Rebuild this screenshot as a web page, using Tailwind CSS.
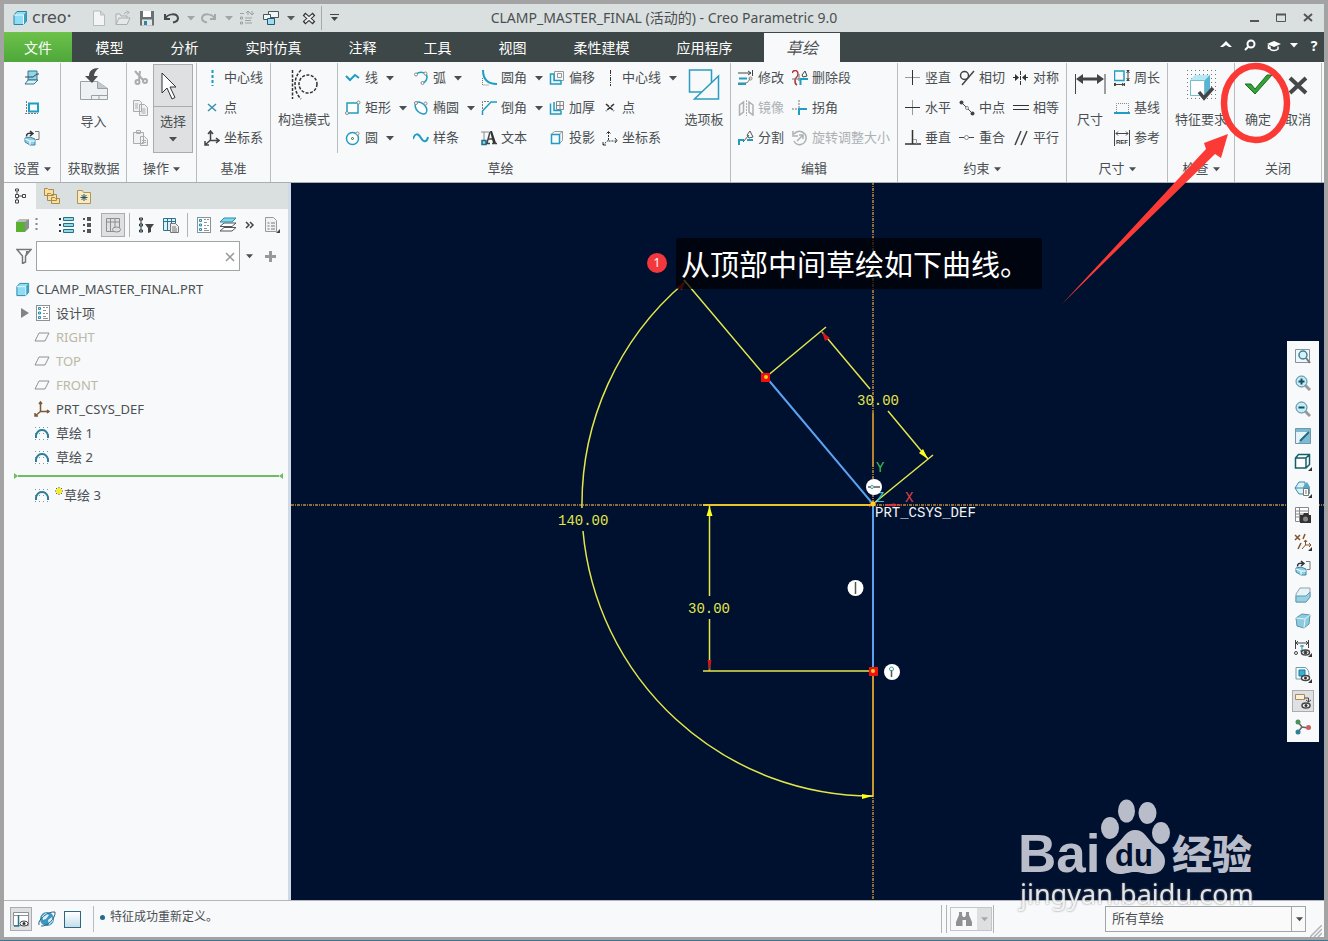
<!DOCTYPE html>
<html lang="zh-CN">
<head>
    <meta charset="UTF-8">
    <meta name="viewport" content="width=device-width, initial-scale=1.0">
    <title>CLAMP_MASTER_FINAL (活动的) - Creo Parametric 9.0</title>
    <script src="https://cdn.jsdelivr.net/npm/@tailwindcss/browser@4"></script>
</head>
<body class="relative h-screen overflow-hidden bg-[#3f7391] pb-px font-['Noto_Sans','Noto_Sans_CJK_SC',sans-serif] text-[13px] text-[#4b4f52]">

    <!-- shared symbols -->
    <svg class="hidden">
        <symbol id="caret" viewBox="0 0 8 5"><path d="M0 0h8L4 4.6z" fill="currentColor"/></symbol>
        <symbol id="plane" viewBox="0 0 16 16"><path d="M5 4h10l-4 8H1z" fill="none" stroke="#8f9294"/></symbol>
        <symbol id="sketch" viewBox="0 0 16 16">
            <path d="M1 2.500h14M1 8.500h14M1 14.500h14" stroke="#7d98a3" stroke-dasharray="1 3"/>
            <path d="M2 13v-3c1-3 3-5 6-5s5 2 6 5v3" fill="none" stroke="#2f7f9b" stroke-width="2"/>
        </symbol>
        <symbol id="list" viewBox="0 0 16 16">
            <rect x="1.5" y=".5" width="13" height="15" fill="#fff" stroke="#8b9194"/>
            <path d="M3.500 2.500h2v2h-2zM3.500 7h2v2h-2zM3.500 11.500h2v2h-2z" fill="#bfeaf7" stroke="#2a8fb0"/>
            <path d="M8 2.500h2m1 0h2M8 5.500h3M8 8.500h2m1 0h2M8 11.500h3M8 13.500h5" stroke="#8b9194"/>
        </symbol>
        <symbol id="orient" viewBox="0 0 16 16">
            <path d="M2.500 6.500C2.500 3.500 4 3 8 3.500M6 1l3 2.500L6 6" fill="none" stroke="#333" stroke-width="1.500"/>
            <path d="M11 1.500h4v8h-3" fill="none" stroke="#777"/>
            <path d="M1 8l5-1 5 2v6H6L1 12z" fill="#8fcfe6" stroke="#3c87a3"/><path d="M1 9l5 2v4M6 11h5" fill="none" stroke="#fff"/>
        </symbol>
        <symbol id="cube" viewBox="0 0 16 16">
            <path d="M2 5l3-3.500h9.500V11L11.500 14.500H2z" fill="#8fdcf5" stroke="#2c83a3"/>
            <path d="M11.500 5l3-3.500V11l-3 3.500z" fill="#3f9fc2"/><path d="M2 5h9.500v9.500" fill="none" stroke="#e6fbff"/>
        </symbol>
    </svg>

    <div class="flex h-full flex-col border-4 border-b-[3px] border-[#a3a3a4] bg-[#f7f9fb]">

        <!-- title bar -->
        <header class="relative flex h-7 shrink-0 items-center bg-[#dae0df]">
            <svg class="ml-2 size-4" viewBox="0 0 16 16"><use href="#cube"/></svg>
            <span class="ml-1 w-[60px] font-['DejaVu_Sans',sans-serif] text-[16px] leading-5">creo<sup class="text-[8px]">•</sup></span>
            <div class="-ml-px flex items-center gap-2 text-[#555a5c]">
                <button aria-label="新建" class="size-4"><svg viewBox="0 0 16 16"><path d="M2.500 1h7l4 4v10.500h-11zM9.500 1v4h4" fill="#f3f4f4" stroke="#b7bbbc"/></svg></button>
                <button aria-label="打开" class="size-4"><svg viewBox="0 0 16 16" fill="none" stroke="#a9aeb0"><path d="M1 14.500V4h4l1 2h6v2M1 14.500L4 8h11l-3 6.500z" fill="#e7e9e9"/><path d="M9 4c1-2 3-2.500 5-1.500M12 .5l2 2-2 2"/></svg></button>
                <button aria-label="保存" class="size-4"><svg viewBox="0 0 16 16"><path d="M1 1h14v14.500H1z" fill="#6a7073"/><path d="M4 1h8v6H4z" fill="#fff"/><path d="M3 9.500h10v6H3z" fill="#dfe6e8"/><path d="M5 11h3v4H5z" fill="#3a80a0"/></svg></button>
                <button aria-label="撤消" class="size-4"><svg viewBox="0 0 16 16" fill="none" stroke="#45494b" stroke-width="2"><path d="M2 4v5h5M2 9c3-6 12-6 13-1 0 3-2 4-5 4.500"/></svg></button>
                <button aria-label="撤消列表" class="w-1.5"><svg class="h-[5px] w-2 text-[#a0a5a6]"><use href="#caret"/></svg></button>
                <button aria-label="重做" class="size-4"><svg viewBox="0 0 16 16" fill="none" stroke="#a4a9aa" stroke-width="2"><path d="M14 4v5H9M14 9C11 3 2 3 1 8c0 3 2 4 5 4.500"/></svg></button>
                <button aria-label="重做列表" class="w-1.5"><svg class="h-[5px] w-2 text-[#a0a5a6]"><use href="#caret"/></svg></button>
                <button aria-label="重新生成" class="size-4"><svg viewBox="0 0 16 16" fill="none" stroke="#9ba0a2"><path d="M1 3.500h4M1.500 7v2h2V7zM1.500 12v2h2v-2zM6 8h7M6 13h7M6 10.500h6"/><path d="M9 5V1M7 3l2-2 2 2M13 1v4M11 3l2 2 2-2"/></svg></button>
                <button aria-label="窗口" class="size-4"><svg viewBox="0 0 16 16" fill="#eef6f8" stroke="#4a5558"><path d="M5.500 1.500h10v6h-10z"/><path d="M.5 4.500h7v5h-7z"/><path d="M4.500 8.500h7v6h-7z" fill="#9fdcf0" stroke="#27586c"/></svg></button>
                <button aria-label="窗口列表" class="w-1.5"><svg class="h-[5px] w-2"><use href="#caret"/></svg></button>
                <button aria-label="关闭窗口" class="size-4"><svg viewBox="0 0 16 16"><path d="M3 4l10 9M13 4L3 13" stroke="#333" stroke-width="4"/><path d="M4 5l8 7M12 5l-8 7" stroke="#eef0f0" stroke-width="2"/></svg></button>
            </div>
            <span class="ml-1 h-6 w-px bg-[#a5abac]"></span>
            <button aria-label="自定义" class="ml-2"><svg class="h-2 w-[9px]" viewBox="0 0 9 8"><path d="M0 .5h9" stroke="#444"/><path d="M1 3h7L4.500 7z" fill="#444"/></svg></button>
            <h1 class="absolute inset-x-0 text-center text-[14px] leading-5">CLAMP_MASTER_FINAL (活动的) - Creo Parametric 9.0</h1>
            <div class="relative mr-2 ml-auto flex gap-[11px]">
                <button aria-label="最小化" class="size-4"><svg viewBox="0 0 16 16"><path d="M4 11h9" stroke="#555" stroke-width="2"/></svg></button>
                <button aria-label="最大化" class="size-4"><svg viewBox="0 0 16 16" fill="none" stroke="#555"><path d="M3.500 4.500h9v7h-9z"/><path d="M3 4.500h10" stroke-width="2"/></svg></button>
                <button aria-label="关闭" class="size-4"><svg viewBox="0 0 16 16"><path d="M4 4l8 7M12 4l-8 7" stroke="#555" stroke-width="2"/></svg></button>
            </div>
        </header>

        <!-- ribbon tabs -->
        <nav class="flex h-[30px] shrink-0 items-stretch bg-[#3d4747] text-[14px] whitespace-nowrap text-white">
            <button class="w-[68px] bg-linear-to-b from-[#6cc24a] to-[#4ea73a]">文件</button>
            <button class="w-[75px]">模型</button>
            <button class="w-[75px]">分析</button>
            <button class="w-[103px]">实时仿真</button>
            <button class="w-[75px]">注释</button>
            <button class="w-[75px]">工具</button>
            <button class="w-[75px]">视图</button>
            <button class="w-[103px]">柔性建模</button>
            <button class="w-[103px]">应用程序</button>
            <button class="mt-px ml-2 w-[76px] bg-[#f7f9fb] text-[16px] text-[#4b4f52] italic">草绘</button>
            <div class="mr-1 mb-1 ml-auto flex items-center gap-2">
                <button aria-label="折叠功能区" class="size-4"><svg viewBox="0 0 16 16"><path d="M2 10l6-6 6 6h-3L8 8l-3 2z" fill="#fff"/></svg></button>
                <button aria-label="搜索" class="size-4"><svg viewBox="0 0 16 16" fill="none" stroke="#fff" stroke-width="2"><circle cx="9" cy="7" r="3.500"/><path d="M6.500 9.500L3 13"/></svg></button>
                <button aria-label="学习" class="size-4"><svg viewBox="0 0 16 16"><path d="M1 7l7-3 7 3-7 3z" fill="#fff"/><path d="M4 9.500V12c2 2 6 2 8 0V9.500M2.500 8v4" fill="none" stroke="#fff" stroke-width="1.500"/></svg></button>
                <button aria-label="学习列表" class="w-1.5"><svg class="h-[5px] w-2"><use href="#caret"/></svg></button>
                <button aria-label="帮助" class="w-4 pl-1 text-[14px] font-bold">?</button>
            </div>
        </nav>

        <!-- ribbon -->
        <section class="flex h-[121px] shrink-0 border-b border-[#a9b0b4] pt-px whitespace-nowrap">

            <div class="flex w-[57px] flex-col border-r border-[#b9bdc0]">
                <div class="flex h-[90px] flex-col items-center">
                    <button aria-label="草绘设置" class="flex h-[30px] items-center"><svg class="size-4" viewBox="0 0 16 16"><path d="M4 1h9v9H4z" fill="#8fd6ec" stroke="#34778f"/><path d="M4 10h10l-4 4H1z" fill="#d9f1f8" stroke="#34778f"/><path d="M1 7h8l4-3h2" fill="none" stroke="#444"/></svg></button>
                    <button aria-label="参考" class="flex h-[30px] items-center"><svg class="size-4" viewBox="0 0 16 16" fill="none"><path d="M5 3.500h9v8H5z" stroke="#1ea0c4" stroke-width="2"/><path d="M2.500 1v13M1 13.500h13" stroke="#777" stroke-dasharray="2 1"/></svg></button>
                    <button aria-label="草绘视图" class="flex h-[30px] items-center"><svg class="size-4"><use href="#orient"/></svg></button>
                </div>
                <button class="mt-1 flex h-6 items-center justify-center gap-1">设置<svg class="h-[5px] w-[7px]"><use href="#caret"/></svg></button>
            </div>

            <div class="flex w-[66px] flex-col border-r border-[#b9bdc0]">
                <button class="flex h-[90px] flex-col items-center pt-1">
                    <svg class="size-9" viewBox="0 0 36 36"><path d="M4.500 14.500h17l10 7v11h-27z" fill="#eef1f3" stroke="#9aa0a3"/><path d="M21.500 14.500v7h10" fill="#c3cacd" stroke="#9aa0a3"/><path d="M15.500 32.500v-4h16M23 28.500v4" fill="none" stroke="#9aa0a3"/><path d="M23 1c-7 0-10 3-10 8H9l7 7 6-7h-4c0-3 2-6 5-8z" fill="#4a4e50"/></svg>
                    <span class="mt-2 leading-5">导入</span>
                </button>
                <div class="mt-1 flex h-6 items-center justify-center">获取数据</div>
            </div>

            <div class="flex w-[70px] flex-col border-r border-[#b9bdc0]">
                <div class="flex h-[90px] justify-between pr-[3px] pl-[5px]">
                    <div class="flex flex-col">
                        <button aria-label="剪切" class="flex h-[30px] items-center"><svg class="size-4" viewBox="0 0 16 16" fill="none" stroke="#a9adaf" stroke-width="2"><path d="M3 1l8 9M8 1L7 10"/><circle cx="5.500" cy="12" r="2"/><circle cx="13" cy="11" r="2"/></svg></button>
                        <button aria-label="复制" class="flex h-[30px] items-center"><svg class="size-4" viewBox="0 0 16 16" fill="#f0f1f2" stroke="#a9adaf"><path d="M1.500.5h6l2 2v9h-8zM7.500 4.500h5l3 3v8h-8z"/><path d="M3 4h3M3 6h3M3 8h3M9.500 9h4M9.500 11h4M9.500 13h4"/></svg></button>
                        <button aria-label="粘贴" class="flex h-[30px] items-center"><svg class="size-4" viewBox="0 0 16 16" fill="#f0f1f2" stroke="#a9adaf"><path d="M1.500 2.500h10v11h-10zM4.500.5h4v3h-4zM8.500 6.500h4l3 3v6h-7z"/><path d="M10 10.500h4M10 12.500h4"/></svg></button>
                    </div>
                    <button class="mt-px flex w-10 flex-col items-center border border-[#a9adaf] bg-[#dfe0e1]">
                        <span class="flex h-[42px] w-full items-center justify-center border-b border-[#a9adaf]"><svg class="h-8 w-8" viewBox="0 0 32 32"><path d="M5 3v20l5-5 5 11 3-1.500-5-10.500h6z" fill="#fff" stroke="#333"/></svg></span>
                        <span class="mt-1 leading-5">选择</span>
                        <svg class="mt-1.5 h-[5px] w-2"><use href="#caret"/></svg>
                    </button>
                </div>
                <button class="mt-1 flex h-6 items-center justify-center gap-1">操作<svg class="h-[5px] w-[7px]"><use href="#caret"/></svg></button>
            </div>

            <div class="flex w-[74px] flex-col border-r border-[#b9bdc0]">
                <div class="h-[90px] pl-[7px]">
                    <button class="flex h-[30px] items-center gap-1"><svg class="size-4" viewBox="0 0 16 16"><path d="M8.500 0v16" stroke="#1b9cc0" stroke-width="2" stroke-dasharray="3 2"/></svg>中心线</button>
                    <button class="flex h-[30px] items-center gap-1"><svg class="size-4" viewBox="0 0 16 16"><path d="M4 4l8 7M12 4l-8 7" stroke="#3b8fae" stroke-width="1.500"/></svg>点</button>
                    <button class="flex h-[30px] items-center gap-1"><svg class="size-4" viewBox="0 0 16 16" fill="none" stroke="#444" stroke-width="1.500"><path d="M6.500 1v9.500H15M6.500 10L1 15M4 4l2.500-3L9 4M12 8l3 2.500-3 2.500M1 11v4h4"/></svg>坐标系</button>
                </div>
                <div class="mt-1 flex h-6 items-center justify-center">基准</div>
            </div>

            <div class="flex w-[460px] flex-col border-r border-[#b9bdc0]">
                <div class="flex h-[90px]">
                    <button class="flex w-[67px] flex-col items-center border-r border-[#b9bdc0] pt-1.5">
                        <svg class="size-8" viewBox="0 0 32 32" fill="none" stroke="#333" stroke-width="1.500" stroke-dasharray="3 1.500"><path d="M4.500 1v29M13 1c-8 8-8 21 0 29"/><circle cx="20" cy="15" r="9"/></svg>
                        <span class="mt-2 leading-5">构造模式</span>
                    </button>
                    <div class="w-[68px] pl-[7px]">
                        <button class="flex h-[30px] items-center gap-1"><svg class="size-4" viewBox="0 0 16 16" fill="none"><path d="M1 6l4 4 5-5 4 3" stroke="#1f9dc2" stroke-width="2"/></svg>线<svg class="ml-1 h-[5px] w-2"><use href="#caret"/></svg></button>
                        <button class="flex h-[30px] items-center gap-1"><svg class="size-4" viewBox="0 0 16 16" fill="#fff"><path d="M2 3h11v10H2z" stroke="#1f9dc2" stroke-width="1.500"/><circle cx="13.500" cy="2.500" r="1.500" stroke="#888"/><circle cx="2" cy="13" r="1.500" stroke="#888"/></svg>矩形<svg class="ml-1 h-[5px] w-2"><use href="#caret"/></svg></button>
                        <button class="flex h-[30px] items-center gap-1"><svg class="size-4" viewBox="0 0 16 16" fill="#fff"><circle cx="7.500" cy="8.500" r="6" stroke="#1f9dc2" stroke-width="1.500"/><circle cx="7.500" cy="8.500" r="1" stroke="#555"/><circle cx="12.500" cy="3.500" r="1.500" stroke="#888"/></svg>圆<svg class="ml-1 h-[5px] w-2"><use href="#caret"/></svg></button>
                    </div>
                    <div class="w-[68px] pl-[7px]">
                        <button class="flex h-[30px] items-center gap-1"><svg class="size-4" viewBox="0 0 16 16" fill="#fff"><path d="M3 4c6-4 11 0 11 3 0 4-2 5-4 6" fill="none" stroke="#1f9dc2" stroke-width="1.500"/><circle cx="3" cy="4.500" r="1.500" stroke="#888"/><circle cx="12.500" cy="3.500" r="1.500" stroke="#888"/><circle cx="9.500" cy="13" r="1.500" stroke="#888"/></svg>弧<svg class="ml-1 h-[5px] w-2"><use href="#caret"/></svg></button>
                        <button class="flex h-[30px] items-center gap-1"><svg class="size-4" viewBox="0 0 16 16" fill="#fff"><ellipse cx="8" cy="8" rx="7" ry="4.500" transform="rotate(45 8 8)" stroke="#1f9dc2" stroke-width="1.500"/><circle cx="3" cy="3" r="1.500" stroke="#888"/><circle cx="12.500" cy="3.500" r="1.500" stroke="#888"/></svg>椭圆<svg class="ml-1 h-[5px] w-2"><use href="#caret"/></svg></button>
                        <button class="flex h-[30px] items-center gap-1"><svg class="size-4" viewBox="0 0 16 16" fill="none"><path d="M0 9c2-6 5-6 8-1s6 4 7-1" stroke="#1f9dc2" stroke-width="2"/></svg>样条</button>
                    </div>
                    <div class="w-[68px] pl-[7px]">
                        <button class="flex h-[30px] items-center gap-1"><svg class="size-4" viewBox="0 0 16 16" fill="none"><path d="M2 0c0 9 5 14 14 14" stroke="#1f9dc2" stroke-width="2"/><path d="M1.500 8v7h7" stroke="#777" stroke-dasharray="1 1"/></svg>圆角<svg class="ml-1 h-[5px] w-2"><use href="#caret"/></svg></button>
                        <button class="flex h-[30px] items-center gap-1"><svg class="size-4" viewBox="0 0 16 16" fill="none"><path d="M1.500 15v-4L10 2h6" stroke="#1f9dc2" stroke-width="1.500"/><path d="M1.500 9V1.500h7" stroke="#777" stroke-dasharray="2 1"/></svg>倒角<svg class="ml-1 h-[5px] w-2"><use href="#caret"/></svg></button>
                        <button class="flex h-[30px] items-center gap-1"><svg class="size-4" viewBox="0 0 16 16"><path d="M0 2h8M3 2v9" stroke="#888"/><path d="M1 10.500h4v4H1z" fill="#8fd6ec" stroke="#1c6e8c" stroke-width="1.500"/><path d="M9 2L6 13M7 9h6M5 13.500h4M11 13.500h5" fill="none" stroke="#444" stroke-width="1.500"/><path d="M9 1h2l4 12h-3z" fill="#333"/></svg>文本</button>
                    </div>
                    <div class="w-[54px] pl-[7px]">
                        <button class="flex h-[30px] items-center gap-1"><svg class="size-4" viewBox="0 0 16 16" fill="none"><path d="M5.500 1.500h9v9h-9zM8.500 3.500h4v4h-4z" stroke="#999"/><path d="M5 4H1.500v10H12v-3.500M5 4v6.500h7" stroke="#1f9dc2" stroke-width="1.500"/></svg>偏移</button>
                        <button class="flex h-[30px] items-center gap-1"><svg class="size-4" viewBox="0 0 16 16" fill="none"><path d="M7.500 1.500h7v8h-7zM11 1.500v8M7.500 5.500h7" stroke="#888"/><path d="M1.500 3.500V14H12v-3.500M5 2v8.500h7" stroke="#1f9dc2" stroke-width="1.500"/></svg>加厚</button>
                        <button class="flex h-[30px] items-center gap-1"><svg class="size-4" viewBox="0 0 16 16" fill="none"><path d="M2.500 4l3-2.500h8v9l-3 3M10.500 4l3-2.500" stroke="#999"/><path d="M2.500 4.500h8v9h-8z" stroke="#1f9dc2" stroke-width="1.500"/></svg>投影</button>
                    </div>
                    <div class="w-[78px] pl-1.5">
                        <button class="flex h-[30px] items-center gap-1"><svg class="size-4" viewBox="0 0 16 16"><path d="M8.500 0v16" stroke="#333" stroke-dasharray="4 1 1 1"/></svg>中心线<svg class="ml-1 h-[5px] w-2 shrink-0"><use href="#caret"/></svg></button>
                        <button class="flex h-[30px] items-center gap-1"><svg class="size-4" viewBox="0 0 16 16"><path d="M4 4l8 7M12 4l-8 7" stroke="#333" stroke-width="1.500" stroke-dasharray="4 1"/></svg>点</button>
                        <button class="flex h-[30px] items-center gap-1"><svg class="size-4" viewBox="0 0 16 16" fill="none" stroke="#333"><path d="M6.500 2v9H15M6.500 10L1 15" stroke-dasharray="2 1"/><path d="M4.500 3.500l2-2 2 2M13 8l2 2.500-2 2.500M1 12v3h3"/></svg>坐标系</button>
                    </div>
                    <button class="flex grow flex-col items-center pt-1.5 pl-1">
                        <svg class="size-8" viewBox="0 0 32 32" fill="none" stroke="#2b9dbf" stroke-width="1.500"><path d="M1.500 1h22v22h-22z"/><path d="M30.500 7v23h-24z" fill="#f7f9fb"/></svg>
                        <span class="mt-2 leading-5">选项板</span>
                    </button>
                </div>
                <div class="mt-1 flex h-6 items-center justify-center">草绘</div>
            </div>

            <div class="flex w-[167px] flex-col border-r border-[#b9bdc0]">
                <div class="flex h-[90px] pl-[7px]">
                    <div class="w-[54px]">
                        <button class="flex h-[30px] items-center gap-1"><svg class="size-4" viewBox="0 0 16 16" fill="none"><path d="M0 3h13M14.500 0v6M10 1l3 2-3 2" stroke="#444"/><path d="M0 13h7c3 0 4-2 5-5" stroke="#777"/><path d="M0 14h8M1 8.500h8" stroke="#1f9dc2" stroke-width="2"/><circle cx="12.500" cy="8.500" r="1.500" stroke="#888"/></svg>修改</button>
                        <button disabled class="flex h-[30px] items-center gap-1 text-[#adb1b3]"><svg class="size-4" viewBox="0 0 16 16" fill="none" stroke="currentColor"><path d="M1.500 5L5.500 2v10l-4 3zM15 5l-4-3v10l4 3z" stroke-width="1.500"/><path d="M8.500 0v16" stroke-dasharray="2 1"/></svg>镜像</button>
                        <button class="flex h-[30px] items-center gap-1"><svg class="size-4" viewBox="0 0 16 16" fill="none"><path d="M1 15v-5h5M9 10h6" stroke="#1f9dc2" stroke-width="2"/><path d="M5 12l6-7M9 5l3-4 3 6-4 1z" stroke="#555"/></svg>分割</button>
                    </div>
                    <div>
                        <button class="flex h-[30px] items-center gap-1"><svg class="size-4" viewBox="0 0 16 16" fill="none"><path d="M0 3c2-4 6-3 6 1s-3 3-3 6 0 4 2 5" stroke="#b33a3a" stroke-width="1.500"/><path d="M8.500 15v-6H16" stroke="#1f9dc2" stroke-width="2"/><path d="M0 9h7M7 11V4" stroke="#777"/><path d="M10 5l3-4 2 5-4 1z" stroke="#444"/></svg>删除段</button>
                        <button class="flex h-[30px] items-center gap-1"><svg class="size-4" viewBox="0 0 16 16" fill="none"><path d="M7 15v-6h8" stroke="#1f9dc2" stroke-width="2"/><path d="M7 0v8M0 9h6" stroke="#777" stroke-dasharray="2 1"/></svg>拐角</button>
                        <button disabled class="flex h-[30px] items-center gap-1 text-[#adb1b3]"><svg class="size-4" viewBox="0 0 16 16" fill="none" stroke="currentColor"><path d="M2 4c5-6 13-1 12 5s-9 8-12 2M1 1v5h5M5 11l6-6M7 5h4v4" stroke-width="1.500"/></svg>旋转调整大小</button>
                    </div>
                </div>
                <div class="mt-1 flex h-6 items-center justify-center">编辑</div>
            </div>

            <div class="flex w-[169px] flex-col border-r border-[#b9bdc0]">
                <div class="flex h-[90px] pl-[7px]">
                    <div class="w-[54px]">
                        <button class="flex h-[30px] items-center gap-1"><svg class="size-4" viewBox="0 0 16 16"><path d="M0 7.500h15" stroke="#999"/><path d="M7.500 0v15" stroke="#333"/></svg>竖直</button>
                        <button class="flex h-[30px] items-center gap-1"><svg class="size-4" viewBox="0 0 16 16"><path d="M7.500 0v15" stroke="#999"/><path d="M0 7.500h15" stroke="#333"/></svg>水平</button>
                        <button class="flex h-[30px] items-center gap-1"><svg class="size-4" viewBox="0 0 16 16" fill="none"><path d="M7.500 0v14M0 14h16" stroke="#333" stroke-width="1.500"/><path d="M8 9.500h3.500V14" stroke="#999"/></svg>垂直</button>
                    </div>
                    <div class="w-[54px]">
                        <button class="flex h-[30px] items-center gap-1"><svg class="size-4" viewBox="0 0 16 16" fill="none"><circle cx="5.500" cy="5.500" r="4" stroke="#444" stroke-width="1.500"/><path d="M15 1L3 15" stroke="#444" stroke-width="1.500"/></svg>相切</button>
                        <button class="flex h-[30px] items-center gap-1"><svg class="size-4" viewBox="0 0 16 16" fill="#444"><path d="M2 2l12 12" stroke="#444"/><circle cx="2.500" cy="2.500" r="2"/><circle cx="13.500" cy="13.500" r="2"/><circle cx="8" cy="8" r="1.500" fill="#fff" stroke="#888"/></svg>中点</button>
                        <button class="flex h-[30px] items-center gap-1"><svg class="size-4" viewBox="0 0 16 16"><path d="M0 7.500h5M10 7.500h5" stroke="#444"/><circle cx="7.500" cy="7.500" r="2" fill="#fff" stroke="#888"/></svg>重合</button>
                    </div>
                    <div>
                        <button class="flex h-[30px] items-center gap-1"><svg class="size-4" viewBox="0 0 16 16"><path d="M7.500 1v14" stroke="#333" stroke-dasharray="4 1"/><path d="M0 7.500h3M12 7.500h3" stroke="#333"/><path d="M2 4l4 3.500L2 11zM13 4L9 7.500l4 3.500z" fill="#333"/></svg>对称</button>
                        <button class="flex h-[30px] items-center gap-1"><svg class="size-4" viewBox="0 0 16 16"><path d="M0 5.500h16M0 9.500h16" stroke="#333"/></svg>相等</button>
                        <button class="flex h-[30px] items-center gap-1"><svg class="size-4" viewBox="0 0 16 16"><path d="M8 1L2 15M14 1L8 15" stroke="#444" stroke-width="1.500"/></svg>平行</button>
                    </div>
                </div>
                <button class="mt-1 flex h-6 items-center justify-center gap-1">约束<svg class="h-[5px] w-[7px]"><use href="#caret"/></svg></button>
            </div>

            <div class="flex w-[101px] flex-col border-r border-[#b9bdc0]">
                <div class="flex h-[90px] pl-1.5">
                    <button class="flex w-[34px] flex-col items-center pt-1.5">
                        <svg class="size-8" viewBox="0 0 32 32"><path d="M1.500 5v20M31 5v20" stroke="#444"/><path d="M2 10l7-5v3.500h14V5l7 5-7 5v-3.500H9V15z" fill="#444"/></svg>
                        <span class="mt-2 leading-5">尺寸</span>
                    </button>
                    <div class="pl-[7px]">
                        <button class="flex h-[30px] items-center gap-1"><svg class="size-4" viewBox="0 0 16 16" fill="none"><path d="M.5 1h9.500v9.500H.5z" stroke="#1f9dc2" stroke-width="1.500"/><path d="M14 1v9M12.500.5h3M12.500 10.500h3M12.500 3l1.500-2 1.500 2M12.500 8l1.500 2 1.500-2M0 14.500h10M.5 13v3M10.500 13v3M2 13l-2 1.500L2 16M8 13l2 1.500L8 16" stroke="#444"/></svg>周长</button>
                        <button class="flex h-[30px] items-center gap-1"><svg class="size-4" viewBox="0 0 16 16" fill="none"><path d="M2.500 12V3.500h12V12" stroke="#888" stroke-dasharray="1 1"/><path d="M0 13h16" stroke="#1f9dc2" stroke-width="2"/></svg>基线</button>
                        <button class="flex h-[30px] items-center gap-1"><svg class="size-4" viewBox="0 0 16 16" fill="none"><path d="M.5 0v16M15.500 0v16M2 3.500h12M4 1.500L2 3.500l2 2M12 1.500l2 2-2 2" stroke="#444"/><text x="8" y="14" text-anchor="middle" font-size="6" font-family="Liberation Sans" font-weight="bold" fill="#333">REF</text></svg>参考</button>
                    </div>
                </div>
                <button class="mt-1 flex h-6 items-center justify-center gap-1">尺寸<svg class="h-[5px] w-[7px]"><use href="#caret"/></svg></button>
            </div>

            <div class="flex w-[67px] flex-col border-r border-[#b9bdc0]">
                <button class="flex h-[90px] flex-col items-center pt-1.5">
                    <svg class="size-8" viewBox="0 0 32 32"><path d="M2 1.500h29M2 5.500h29M2 9.500h29M2 13.500h29M2 17.500h29M2 21.500h29M2 25.500h29M2 29.500h29" stroke="#777" stroke-dasharray="1 3"/><path d="M5 11l5-5h15v15l-5 6H5z" fill="#b5e8f7"/><path d="M5.500 11.500h14v15h-14z" fill="#fff" stroke="#79bdd3"/><path d="M20 11l5-5v15l-5 6z" fill="#57b4d3"/><path d="M14 23l5 6 9-10" fill="none" stroke="#444" stroke-width="3.500"/></svg>
                    <span class="mt-2 leading-5">特征要求</span>
                </button>
                <button class="mt-1 flex h-6 items-center justify-center gap-1">检查<svg class="h-[5px] w-[7px]"><use href="#caret"/></svg></button>
            </div>

            <div class="flex w-[87px] flex-col border-r border-[#b9bdc0]">
                <div class="flex h-[90px] justify-center">
                    <button class="flex w-10 flex-col items-center pt-1.5">
                        <svg class="size-8" viewBox="0 0 32 32"><path d="M3 15h6l4 5L25 6h5L13 25z" fill="#35a234" stroke="#1e6a28"/></svg>
                        <span class="mt-2 leading-5">确定</span>
                    </button>
                    <button class="flex w-10 flex-col items-center pt-1.5">
                        <svg class="size-8" viewBox="0 0 32 32"><path d="M8 9l16 15M24 9L8 24" stroke="#444849" stroke-width="4"/></svg>
                        <span class="mt-2 leading-5">取消</span>
                    </button>
                </div>
                <div class="mt-1 flex h-6 items-center justify-center">关闭</div>
            </div>
        </section>

        <div class="flex min-h-0 grow">
            <!-- model tree -->
            <aside class="flex w-[287px] shrink-0 flex-col border-r-[3px] border-[#cfdae6]">
                <div class="flex h-[26px] items-stretch bg-[#dae0df]">
                    <button aria-label="模型树" class="flex w-8 items-center justify-center bg-[#f7f9fb]"><svg class="size-4" viewBox="0 0 16 16" fill="none" stroke="#444"><path d="M3.500 1v2h3V1zM3.500 6.500v3h3v-3zM3.500 12v3h3v-3zM10.500 6.500v3h3v-3zM5 3.500v3M5 9.500V12M6.500 8h4"/></svg></button>
                    <button aria-label="文件夹浏览器" class="flex w-8 items-center justify-center"><svg class="size-[18px]" viewBox="0 0 18 18" fill="#f8dfa2" stroke="#a98a4a"><path d="M1.500 1.500h3l1 1h5v6h-9zM4.500 6.500h3l1 1h5v6h-9zM8.500 10.500h3l1 1h4v5h-8z"/></svg></button>
                    <button aria-label="收藏夹" class="flex w-8 items-center justify-center"><svg class="size-4" viewBox="0 0 16 16"><path d="M1.500 2.500h5l1 2h7v11h-13z" fill="#fbe9bd" stroke="#b0945a"/><path d="M8 6v7M4.500 9.500h7M5.500 7l5 5M10.500 7l-5 5" stroke="#23566b"/></svg></button>
                </div>
                <div class="flex h-8 items-center pl-2.5">
                    <button aria-label="显示" class="size-4"><svg viewBox="0 0 16 16"><path d="M2 5l4-3h9v9l-4 4z" fill="#8a8f90"/><path d="M2 5l4-3h9l-4 3z" fill="#b9bdbe"/><path d="M2 5h9v10H2z" fill="#5ab031"/></svg></button>
                    <svg class="ml-0.5 h-4 w-2" viewBox="0 0 8 16"><path d="M4.500 1v15" stroke="#888" stroke-width="2" stroke-dasharray="2 3"/></svg>
                    <button aria-label="全部展开" class="ml-[18px] size-4"><svg viewBox="0 0 16 16"><path d="M1 2h2M1 8h2M1 14h2" stroke="#333" stroke-width="2"/><path d="M5.500.5h10v3h-10zM5.500 6.500h10v3h-10zM5.500 12.500h10v3h-10z" fill="#8edbe9" stroke="#286f80"/></svg></button>
                    <button aria-label="全部折叠" class="ml-2 size-4"><svg viewBox="0 0 16 16" fill="#555"><path d="M1 1h2v2H1zM1 7h2v2H1zM1 13h2v2H1zM5 0h4v4H5zM5 6h4v4H5zM5 12h4v4H5z"/></svg></button>
                    <button aria-label="列" class="ml-[3px] flex size-6 items-center justify-center border border-[#a9adaf] bg-[#dfe0e1]"><svg class="size-4" viewBox="0 0 16 16" fill="none" stroke="#8b8f91"><path d="M1.500 1.500h13v13h-13zM1.500 5h13M5.500 1.500v13M10 1.500v13"/><ellipse cx="11.500" cy="12.500" rx="4" ry="2.500" fill="#dfe0e1"/></svg></button>
                    <span class="ml-1 h-6 w-px bg-[#b0b4b6]"></span>
                    <button aria-label="过滤器" class="ml-2 size-4"><svg viewBox="0 0 16 16"><path d="M1.500 1v2h3V1zM1.500 7v2h3V7zM1.500 13v2h3v-2zM3 3v4M3 9v4" fill="#7fd0e2" stroke="#333"/><path d="M7 7h9l-3 4v4l-3 1v-5z" fill="#444"/></svg></button>
                    <button aria-label="树列" class="ml-[9px] size-4"><svg viewBox="0 0 16 16"><path d="M.5 1.500h12v12H.5zM4.500 1.500v12M8.500 1.500v12M.5 4.500h12" fill="#d9f1f8" stroke="#31708a"/><path d="M7.500 6.500h5l3 3v6h-8z" fill="#eee" stroke="#777"/><path d="M9 10h4M9 12h5M9 14h5" stroke="#777"/></svg></button>
                    <span class="ml-2 h-6 w-px bg-[#b0b4b6]"></span>
                    <button aria-label="设计项" class="ml-2 size-4"><svg class="size-4"><use href="#list"/></svg></button>
                    <button aria-label="图层" class="ml-2 size-4"><svg viewBox="0 0 16 16" fill="#fff" stroke="#555"><path d="M0 14l4-3.500h12L12 14z"/><path d="M0 9.500L4 6h12l-4 3.500z"/><path d="M0 5l4-4h12l-4 4z" fill="#7fd8ee" stroke="#2b8caa"/></svg></button>
                    <button aria-label="更多" class="ml-1.5 w-4"><svg class="size-4" viewBox="0 0 16 16" fill="none" stroke="#444" stroke-width="1.500"><path d="M4 5l3 3-3 3M8 5l3 3-3 3"/></svg></button>
                    <button aria-label="设置" class="ml-1.5 size-4"><svg viewBox="0 0 16 16"><path d="M1.500.5h8l3 3v11h-11z" fill="#f1f2f3" stroke="#999"/><path d="M3.500 6h2M7 6h4M3.500 9h2M7 9h4M3.500 12h2M7 12h4" stroke="#777"/><path d="M16 12v4h-4z" fill="#444"/></svg></button>
                </div>
                <div class="flex items-center pl-3">
                    <svg class="size-4" viewBox="0 0 16 16"><path d="M1 1.500h14L9.500 8v6l-3 1.500V8z" fill="#fff" stroke="#777" stroke-width="1.500"/><path d="M10 3h3L9 8v5z" fill="#777"/></svg>
                    <label for="tree-search" class="sr-only">搜索</label>
                    <div class="relative ml-1 h-[30px] w-[204px]">
                        <input id="tree-search" type="text" class="size-full border border-[#a0a5a8] bg-white px-2 outline-none">
                        <button aria-label="清除" class="absolute top-[11px] right-[5px] size-2.5"><svg viewBox="0 0 10 10"><path d="M1 1l8 8M9 1L1 9" stroke="#999" stroke-width="1.500"/></svg></button>
                    </div>
                    <button aria-label="搜索选项" class="ml-1.5"><svg class="h-[5px] w-[7px]"><use href="#caret"/></svg></button>
                    <button aria-label="添加" class="ml-3"><svg class="size-[11px]" viewBox="0 0 11 11"><path d="M5.500 0v11M0 5.500h11" stroke="#96999b" stroke-width="3"/></svg></button>
                </div>
                <ul class="mt-1.5 leading-6">
                    <li class="flex h-6 items-center gap-1.5 pl-[11px]"><svg class="size-[15px]"><use href="#cube"/></svg>CLAMP_MASTER_FINAL.PRT</li>
                    <li class="flex h-6 items-center pl-[17px]"><svg class="h-2.5 w-2" viewBox="0 0 8 10"><path d="M0 0l8 5-8 5z" fill="#808486"/></svg><svg class="mr-[5px] ml-1.5 size-4"><use href="#list"/></svg>设计项</li>
                    <li class="flex h-6 items-center gap-1.5 pl-[30px] text-[#bbb8a4]"><svg class="size-4"><use href="#plane"/></svg>RIGHT</li>
                    <li class="flex h-6 items-center gap-1.5 pl-[30px] text-[#bbb8a4]"><svg class="size-4"><use href="#plane"/></svg>TOP</li>
                    <li class="flex h-6 items-center gap-1.5 pl-[30px] text-[#bbb8a4]"><svg class="size-4"><use href="#plane"/></svg>FRONT</li>
                    <li class="flex h-6 items-center gap-1.5 pl-[30px]"><svg class="size-4" viewBox="0 0 16 16" fill="none" stroke="#7d5a35"><path d="M6.500 1v9.500H15M6.500 10.500L1 15M5 3l1.500-2L8 3M13 9l2 1.500-2 1.500M1 12v3h3" stroke-width="1.500"/></svg>PRT_CSYS_DEF</li>
                    <li class="flex h-6 items-center gap-1.5 pl-[30px]"><svg class="size-4"><use href="#sketch"/></svg>草绘 1</li>
                    <li class="flex h-6 items-center gap-1.5 pl-[30px]"><svg class="size-4"><use href="#sketch"/></svg>草绘 2</li>
                    <li class="flex h-3.5 items-center pr-[5px] pl-2.5 text-[#6fbd63]">
                        <svg class="h-1.5 w-1" viewBox="0 0 4 6"><path d="M0 0l4 3-4 3z" fill="currentColor"/></svg>
                        <span class="h-0.5 grow bg-[#6fbd63]"></span>
                        <svg class="h-1.5 w-1" viewBox="0 0 4 6"><path d="M4 0L0 3l4 3z" fill="currentColor"/></svg>
                    </li>
                    <li class="flex h-6 items-center pl-[30px]"><svg class="mr-1 size-4"><use href="#sketch"/></svg><svg class="mb-2 size-[10px]" viewBox="0 0 10 10"><path d="M5 1v8M1 5h8M2 2l6 6M8 2L2 8" stroke="#555"/><circle cx="5" cy="5" r="3" fill="#f5ee1f"/></svg>草绘 3</li>
                </ul>
            </aside>

            <!-- sketch canvas -->
            <main class="relative grow bg-[#00102f]">
                <svg class="absolute inset-0 size-full" viewBox="291 183 1033 717" fill="none" font-family="Liberation Mono, monospace" font-size="14">
                    <path d="M873 182v718M291 505h1033" stroke="#c08a3c" stroke-width="1.500" stroke-dasharray="3 1 1 1"/>
                    <path d="M873 413v54" stroke="#b9822f" stroke-width="2"/>
                    <path d="M873 671v126" stroke="#c9962f" stroke-width="2"/>
                    <g stroke="#e3e64a" stroke-width="1.500">
                        <path d="M684 280L766 377L826 327M822 332L870 389M888 411L928 459M873 504L933 455"/>
                        <path d="M684 283A291 291 0 0 0 582 508M583 531A291 291 0 0 0 873 796"/>
                        <path d="M703 671h170M709.500 505v91M709.500 619v52"/>
                    </g>
                    <path d="M703 505h170" stroke="#e8c52a" stroke-width="2"/>
                    <path d="M709.500 506l3 10h-6zM873 796l-11 3v-5zM928 459l-9-6 4-4z" fill="#ffff20"/>
                    <path d="M822 332l3 9 5-3zM685 282l-8 5 5 3zM709.500 671l-2-11h4z" fill="#d4141c"/>
                    <path d="M766 377L873 504V671" stroke="#5aa2f2" stroke-width="2"/>
                    <path d="M761 373h9v9h-9zM869 667h9v9h-9z" fill="#f01010"/>
                    <path d="M869 502l8 5M877 502l-8 5M885 505l10-1v2zM890 505h12" stroke="#d8383a" fill="#d8383a"/>
                    <g fill="#ffd21e"><circle cx="766" cy="377" r="2"/><circle cx="873" cy="504" r="2.500"/><circle cx="873" cy="671" r="2"/></g>
                    <g fill="#e3e64a"><text x="857" y="405">30.00</text><text x="688" y="613">30.00</text><text x="558" y="525">140.00</text></g>
                    <text x="876" y="472" fill="#35c24e">Y</text>
                    <text x="876" y="502" fill="#39c6d8">Z</text>
                    <text x="905" y="502" fill="#e0404a">X</text>
                    <text x="875" y="517" fill="#f4f4f4">PRT_CSYS_DEF</text>
                    <g fill="#fff"><circle cx="874" cy="487" r="8"/><circle cx="855.500" cy="588" r="8"/><circle cx="892" cy="672" r="8"/></g>
                    <path d="M855.500 582v12M891.500 670v7M874 487h6M868 487h3" stroke="#555" stroke-width="1.500"/>
                    <circle cx="872" cy="487" r="1.500" stroke="#4b98a5"/><circle cx="891.500" cy="669" r="2" stroke="#4b98a5"/>
                </svg>

                <div class="absolute top-[158px] right-[5px] flex h-[401px] w-8 flex-col items-center justify-between bg-[#f7f9fb] py-1">
                    <button aria-label="重新调整" class="flex size-[22px] items-center justify-center"><svg class="size-4" viewBox="0 0 16 16"><path d="M.5 1.500h14v13H.5z" fill="#eef7fa" stroke="#8b9194"/><circle cx="8" cy="7" r="4" fill="#d6f1f8" stroke="#3d8298" stroke-width="1.500"/><path d="M11 10l4 5" stroke="#777" stroke-width="2"/></svg></button>
                    <button aria-label="放大" class="flex size-[22px] items-center justify-center"><svg class="size-4" viewBox="0 0 16 16"><path d="M10 10l5 5" stroke="#999" stroke-width="3"/><circle cx="6.500" cy="6.500" r="5.500" fill="#c5ecf6" stroke="#4a8395"/><path d="M6.500 3.500v6M3.500 6.500h6" stroke="#144f65" stroke-width="2"/></svg></button>
                    <button aria-label="缩小" class="flex size-[22px] items-center justify-center"><svg class="size-4" viewBox="0 0 16 16"><path d="M10 10l5 5" stroke="#999" stroke-width="3"/><circle cx="6.500" cy="6.500" r="5.500" fill="#c5ecf6" stroke="#4a8395"/><path d="M3.500 6.500h6" stroke="#144f65" stroke-width="2"/></svg></button>
                    <button aria-label="重画" class="flex size-[22px] items-center justify-center"><svg class="size-4" viewBox="0 0 16 16"><path d="M.5.500h15v15H.5z" fill="#7dbad2" stroke="#6d98a8"/><path d="M1 4h14L3 15H1z" fill="#e6f4f8"/><path d="M14 4L5 13" stroke="#1d6883" stroke-width="2"/></svg></button>
                    <button aria-label="显示样式" class="flex size-[22px] items-center justify-center"><svg class="size-[18px]" viewBox="0 0 18 18"><path d="M1.500 5l3-3.500h11v10L12 15H1.500zM1.500 5H12v10M12 5l3.500-3.500" fill="#fff" stroke="#14606a" stroke-width="1.500"/><path d="M18 14v4h-4z" fill="#333"/></svg></button>
                    <button aria-label="已保存方向" class="flex size-[22px] items-center justify-center"><svg class="size-[18px]" viewBox="0 0 18 18"><path d="M1 8l4-6h6v12H5z" fill="#d9f1f8" stroke="#3f88a0"/><path d="M1 8h9" stroke="#3f88a0"/><path d="M9 7l4-5 3 5v7H9z" fill="#58a8c4"/><path d="M9.500 8.500h5v7h-5zM11 11h2M11 13h2" fill="#fff" stroke="#777"/><path d="M18 14v4h-4z" fill="#333"/></svg></button>
                    <button aria-label="视图管理器" class="flex size-[22px] items-center justify-center"><svg class="size-4" viewBox="0 0 16 16"><path d="M.5.500h13v14H.5zM.5 4h13M.5 7h13M.5 10h13M4.500.5v14" fill="#fff" stroke="#888"/><path d="M5 8h3l1-2h4l1 2h2v8H5z" fill="#333"/><circle cx="10.500" cy="12" r="2.500" fill="#888"/></svg></button>
                    <button aria-label="基准显示" class="flex size-[22px] items-center justify-center"><svg class="size-[18px]" viewBox="0 0 18 18" fill="none" stroke="#84532a"><path d="M1 2l5 5M6 2L1 7M11 1L9 6M7 10l-3 6" stroke-width="1.500"/><path d="M11.500 7v5H17M11.500 12L8 16M10 9l1.500-2L13 9M15 10l2 2-2 2"/><path d="M18 14v4h-4z" fill="#333" stroke="none"/></svg></button>
                    <button aria-label="草绘视图" class="flex size-[22px] items-center justify-center"><svg class="size-4"><use href="#orient"/></svg></button>
                    <button aria-label="修剪模型" class="flex size-[22px] items-center justify-center"><svg class="size-4" viewBox="0 0 16 16"><path d="M1 7l4-6h10v9l-4 5H1z" fill="#e6f4f8" stroke="#8aa5af"/><path d="M1 9h10l4-4v5l-4 5H1z" fill="#9bcfe2" stroke="#5f9db3"/></svg></button>
                    <button aria-label="透视图" class="flex size-[22px] items-center justify-center"><svg class="size-4" viewBox="0 0 16 16"><path d="M1 5l6-4 8 1-1 9-5 4-7-2z" fill="#8ecbe0" stroke="#5597ae"/><path d="M1 5l9 1-1 9M10 6l5-4" fill="none" stroke="#e0f4fa"/></svg></button>
                    <button aria-label="尺寸显示" class="flex size-[22px] items-center justify-center"><svg class="size-[18px]" viewBox="0 0 18 18" fill="none" stroke="#444"><path d="M1.500 1v9M14.500 1v8M2 4h12M4 2L2 4l2 2M12 2l2 2-2 2"/><path d="M8 6v6M6 7h4M6 12h3" stroke="#2b88a5"/><circle cx="2" cy="14" r="1.500"/><ellipse cx="11.500" cy="13.500" rx="4" ry="2.500" fill="#fff" stroke-width="1.500"/><circle cx="11.500" cy="13.500" r="1.500" fill="#333"/><path d="M18 14v4h-4z" fill="#333" stroke="none"/></svg></button>
                    <button aria-label="草绘显示" class="flex size-[22px] items-center justify-center"><svg class="size-[18px]" viewBox="0 0 18 18" fill="none"><path d="M2 2.500h9c3 1 4 4 4 8M2 2.500V14h5" stroke="#6c9fb1"/><path d="M5 5h6v6H5z" fill="#37b0d5" stroke="#1d7d9d"/><ellipse cx="11.500" cy="13" rx="4" ry="2.500" fill="#fff" stroke="#444" stroke-width="1.500"/><circle cx="11.500" cy="13" r="1.500" fill="#333"/><path d="M18 14v4h-4z" fill="#333"/></svg></button>
                    <button aria-label="注释显示" class="flex size-[22px] items-center justify-center border border-[#a9adaf] bg-[#dfe0e1]"><svg class="size-4" viewBox="0 0 16 16" fill="none"><path d="M.5 1.500h9v5h-9z" fill="#fdf0d8" stroke="#a58a62"/><path d="M9.500 5h4v4M11 7l2.500 2L16 7" stroke="#444"/><ellipse cx="11" cy="12.500" rx="4" ry="2.500" fill="#fff" stroke="#444" stroke-width="1.500"/><circle cx="11" cy="12.500" r="1.500" fill="#333"/></svg></button>
                    <button aria-label="旋转中心" class="flex size-[22px] items-center justify-center"><svg class="size-4" viewBox="0 0 16 16"><path d="M3 3l4 5 7 1M7 8l-4 5" fill="none" stroke="#666" stroke-width="1.500"/><circle cx="3" cy="3" r="2.500" fill="#4c8f5a"/><circle cx="13.500" cy="8.500" r="2.500" fill="#c8615c"/><circle cx="3" cy="13" r="2.500" fill="#2f7f9b"/></svg></button>
                </div>
            </main>
        </div>

        <!-- status bar -->
        <footer class="flex h-[37px] shrink-0 items-center border-t border-[#b4b6bc]">
            <button aria-label="导航器" class="ml-1.5 flex h-6 w-[22px] items-center justify-center border border-[#a9adaf] bg-[#dfe0e1]"><svg class="size-4" viewBox="0 0 16 16" fill="none"><path d="M.5 1.500h15v13H.5zM.5 4.500h15" fill="#fff" stroke="#8b9194"/><path d="M5.500 4v11H1" stroke="#2b7590" stroke-width="1.500"/><ellipse cx="11" cy="12.500" rx="4" ry="2.500" fill="#fff" stroke="#444"/><circle cx="11" cy="12.500" r="1.500" fill="#333"/></svg></button>
            <button aria-label="浏览器" class="ml-1.5 size-[18px]"><svg viewBox="0 0 18 18"><circle cx="9" cy="9" r="7" fill="#3f94c0"/><path d="M4 6l4-3 3 2-3 4-3 1zM10 10l4-3 1 4-4 4z" fill="#d8f1fa"/><path d="M1 15C-1 10 10 1 17 2c1 6-8 15-14 14" fill="none" stroke="#2b6482"/></svg></button>
            <button aria-label="全屏" class="ml-2 size-[17px] border border-[#2f6680] bg-linear-to-b from-white to-[#c4dfec]"></button>
            <span class="ml-3 h-[26px] w-px bg-[#b9bdc0]"></span>
            <p class="mb-1 ml-1.5 flex items-center gap-[5px] text-[12px]"><span class="size-[5px] rounded-full bg-[#27698a]"></span>特征成功重新定义。</p>
            <div class="mr-[111px] ml-auto flex h-7 items-center border-x border-[#b0b4b6]">
                <span class="ml-1 h-7 w-px bg-[#b0b4b6]"></span>
                <div class="mr-px ml-[3px] flex h-6 border border-[#c3c6c8]">
                    <button aria-label="查找" class="flex w-[26px] items-center justify-center"><svg class="size-4" viewBox="0 0 16 16" fill="#8f9294"><path d="M3 1h3v3l1 2h2l1-2V1h3v3l3 7v4h-6V9H6.500v6H0v-4l3-7z"/></svg></button>
                    <button aria-label="查找选项" class="flex w-3.5 items-center justify-center bg-[#dddfe0] text-[#a5a8aa]"><svg class="h-[5px] w-[7px]"><use href="#caret"/></svg></button>
                </div>
            </div>
            <label for="sel-filter" class="sr-only">选择过滤器</label>
            <div class="relative h-[26px] w-[201px]">
                <select id="sel-filter" class="size-full appearance-none border border-[#a0a5a8] bg-[#fafafa] px-1.5"><option>所有草绘</option></select>
                <span class="pointer-events-none absolute inset-y-0 right-0 flex w-[15px] items-center justify-center border-l border-[#a0a5a8]"><svg class="h-[5px] w-[7px]"><use href="#caret"/></svg></span>
            </div>
            <svg class="mr-0.5 ml-1 size-3 self-end" viewBox="0 0 12 12"><path d="M0 12L12 0M4 12l8-8M8 12l4-4" stroke="#b0b4b6" stroke-width="1.500"/></svg>
        </footer>
    </div>

    <!-- annotations and watermark lying over the window -->
    <svg class="pointer-events-none absolute inset-0 size-full" viewBox="0 0 1328 941">
        <rect x="676" y="238" width="366" height="51" rx="2" fill="#000" fill-opacity=".7"/>
        <text x="681" y="276" font-family="Noto Sans CJK SC" font-size="29" fill="#fff">从顶部中间草绘如下曲线。</text>
        <circle cx="657" cy="263" r="10" fill="#f2383c"/>
        <text x="657" y="267" text-anchor="middle" font-size="12" fill="#fff">1</text>
        <ellipse cx="1255.500" cy="103" rx="31.500" ry="37" fill="none" stroke="#fb3a36" stroke-width="6.500"/>
        <path d="M1062 304L1206 149l-2-6 24-9-7 24-6-4z" fill="#fb3a36"/>
        <g fill="#b9bcc9">
            <text x="1018" y="872" font-family="Liberation Sans" font-weight="bold" font-size="53">Bai</text>
            <ellipse cx="1110" cy="828" rx="9" ry="11"/><ellipse cx="1126.500" cy="811" rx="8.500" ry="11.500"/>
            <ellipse cx="1147.500" cy="813" rx="9" ry="11"/><ellipse cx="1161" cy="833" rx="9" ry="11"/>
            <path d="M1135 830c9 0 12 8 18 14 7 6 12 10 12 17 0 9-7 13-15 13-6 0-9-2-15-2s-9 2-15 2c-8 0-14-5-14-13 0-7 6-12 12-18s9-13 17-13z"/>
            <text x="1172" y="869" font-family="Noto Sans CJK SC" font-weight="900" font-size="40">经验</text>
        </g>
        <text x="1115" y="866" font-family="Liberation Sans" font-weight="bold" font-size="31" fill="#00102f">du</text>
        <text x="1020" y="904" class="drop-shadow-[0_0_1px_#777]" font-family="Noto Sans" font-size="27" fill="#fff" fill-opacity=".85">jingyan.baidu.com</text>
    </svg>
</body>
</html>
